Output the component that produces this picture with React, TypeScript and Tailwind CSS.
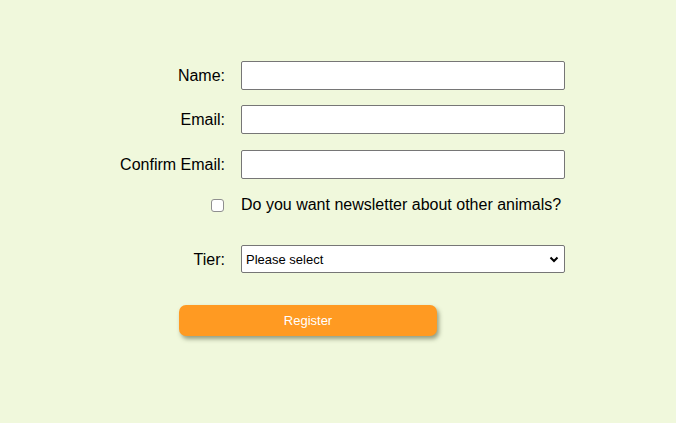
import React from "react";

export default function App() {
  return (
    <div className="w-[676px] h-[423px] bg-[#f0f8dc] text-black overflow-hidden" style={{ fontFamily: '"Liberation Sans", Arial, sans-serif' }}>
      <div className="pt-[61px] pl-[105px] flex flex-col">
        <div className="flex items-center h-[29px]">
          <label className="w-[120px] text-right text-[16px]">Name:</label>
          <input className="ml-[16px] w-[324px] h-[29px] bg-white border border-[#767676] rounded-[2px] outline-none" />
        </div>
        <div className="flex items-center h-[29px] mt-[15px]">
          <label className="w-[120px] text-right text-[16px]">Email:</label>
          <input className="ml-[16px] w-[324px] h-[29px] bg-white border border-[#767676] rounded-[2px] outline-none" />
        </div>
        <div className="flex items-center h-[29px] mt-[16px]">
          <label className="w-[120px] text-right text-[16px] whitespace-nowrap">Confirm Email:</label>
          <input className="ml-[16px] w-[324px] h-[29px] bg-white border border-[#767676] rounded-[2px] outline-none" />
        </div>
        <div className="flex items-center h-[20px] mt-[16px]">
          <div className="w-[120px] flex justify-end pr-[1px]">
            <span className="block w-[13px] h-[13px] bg-white border border-[#8f8f8f] rounded-[3px]" />
          </div>
          <span className="ml-[16px] text-[16px]">Do you want newsletter about other animals?</span>
        </div>
        <div className="flex items-center h-[28px] mt-[30px]">
          <label className="w-[120px] text-right text-[16px] pt-[1px]">Tier:</label>
          <div className="ml-[16px] w-[324px] h-[28px] bg-white border border-[#767676] rounded-[2px] flex items-center justify-between pl-[4px] pr-[5px]">
            <span className="text-[13px] pt-[1px]">Please select</span>
            <svg width="10" height="7" viewBox="0 0 10 7">
              <path d="M1.5 1.5 L5 5 L8.5 1.5" fill="none" stroke="#000" strokeWidth="2" />
            </svg>
          </div>
        </div>
        <div className="mt-[32px] ml-[74px]">
          <button className="w-[258px] h-[31px] bg-[#ff9a22] text-white text-[13px] rounded-[7px] shadow-[2px_3px_4px_rgba(60,70,40,0.5)]">
            Register
          </button>
        </div>
      </div>
    </div>
  );
}
